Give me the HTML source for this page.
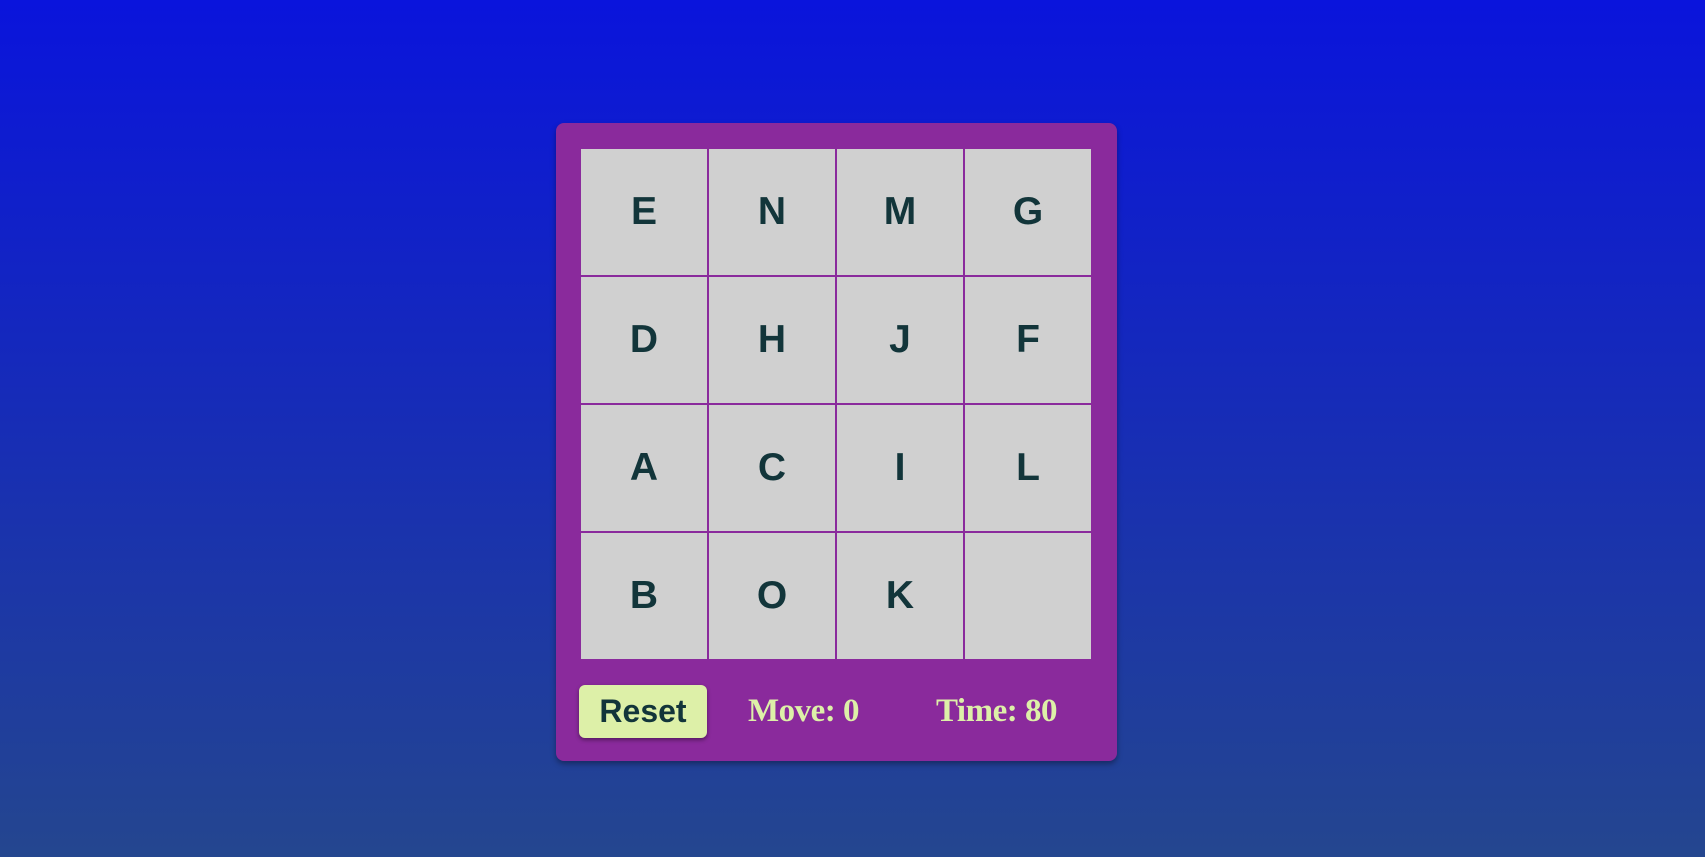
<!DOCTYPE html>
<html><head><style>
html,body{margin:0;padding:0;width:1705px;height:857px;overflow:hidden;}
body{background:linear-gradient(#0a14dc,#24468f);position:relative;font-family:"Liberation Sans",sans-serif;}
.panel{position:absolute;left:556px;top:123px;width:561px;height:638px;background:#8a2a9c;border-radius:8px;box-shadow:0 3px 6px rgba(0,0,0,.35);}
.grid{position:absolute;left:25px;top:26px;width:510px;height:510px;}
.c{position:absolute;width:126px;height:126px;background:#d0d0d0;color:#12353a;font-weight:bold;font-size:39px;display:flex;align-items:center;justify-content:center;}
.btn{position:absolute;left:23px;top:562px;width:128px;height:53px;background:#ddf0a8;border-radius:6px;box-shadow:0 2px 4px rgba(0,0,0,.4);color:#12353a;font-weight:bold;font-size:32px;display:flex;align-items:center;justify-content:center;}
.t{position:absolute;top:568px;font-family:"Liberation Serif",serif;font-weight:bold;font-size:33px;color:#ddf0a8;line-height:40px;letter-spacing:-0.5px;}
</style></head><body>
<div class="panel">
<div class="grid">
<div class="c" style="left:0;top:0">E</div><div class="c" style="left:128px;top:0">N</div><div class="c" style="left:256px;top:0">M</div><div class="c" style="left:384px;top:0">G</div>
<div class="c" style="left:0;top:128px">D</div><div class="c" style="left:128px;top:128px">H</div><div class="c" style="left:256px;top:128px">J</div><div class="c" style="left:384px;top:128px">F</div>
<div class="c" style="left:0;top:256px">A</div><div class="c" style="left:128px;top:256px">C</div><div class="c" style="left:256px;top:256px">I</div><div class="c" style="left:384px;top:256px">L</div>
<div class="c" style="left:0;top:384px">B</div><div class="c" style="left:128px;top:384px">O</div><div class="c" style="left:256px;top:384px">K</div><div class="c" style="left:384px;top:384px"></div>
</div>
<div class="btn">Reset</div>
<div class="t" style="left:192px">Move: 0</div>
<div class="t" style="left:380px">Time: 80</div>
</div>
</body></html>
